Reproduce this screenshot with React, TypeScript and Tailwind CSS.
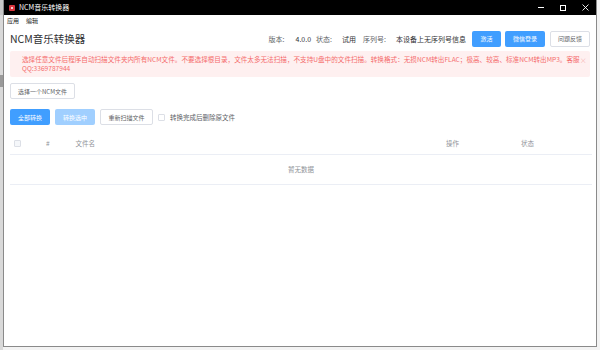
import React from "react";

const F = { fontFamily: '"Noto Sans CJK SC", "Noto Sans", sans-serif' };

export default function App() {
  return (
    <div className="w-[600px] h-[350px] bg-[#f3f3f3] flex overflow-hidden" style={F}>
      <div className="w-[3px] h-full bg-[#d9d9d9] flex flex-col">
        <div className="h-[15px] bg-[#c8c8c8]" />
        <div className="mt-[60px] h-[12px] bg-[#9a9a9a]" />
      </div>
      <div className="w-[594px] h-[347px] flex flex-col bg-white border-l border-r border-b border-[#8a8a8a]">
        {/* title bar */}
        <div className="h-[15px] bg-black flex items-center text-white shrink-0">
          <div className="ml-[5px] w-[6px] h-[6px] rounded-[1px] bg-[#d9363e] flex items-center justify-center">
            <div className="w-[2px] h-[2px] rounded-full bg-white" />
          </div>
          <span className="ml-[4px] text-[7px] leading-none">NCM音乐转换器</span>
          <div className="ml-auto flex items-center h-full text-[8px]">
            <div className="w-[22px] flex justify-center"><div className="w-[6px] h-px bg-white" /></div>
            <div className="w-[22px] flex justify-center"><div className="w-[6px] h-[6px] border border-white" /></div>
            <div className="w-[22px] flex justify-center">
              <svg width="7" height="7" viewBox="0 0 7 7"><path d="M0.5 0.5L6.5 6.5M6.5 0.5L0.5 6.5" stroke="white" strokeWidth="0.9" /></svg>
            </div>
          </div>
        </div>
        {/* menu */}
        <div className="h-[11px] flex items-center gap-[7px] pl-[3px] text-[6px] text-[#222] leading-none shrink-0">
          <span>应用</span>
          <span>编辑</span>
        </div>
        <div className="px-[6px] flex flex-col">
          {/* header */}
          <div className="mt-[5px] h-[16px] flex items-center">
            <div className="text-[10.5px] text-[#303133] leading-none">NCM音乐转换器</div>
            <div className="ml-auto flex items-center text-[7px] leading-none">
              <span className="text-[#606266]">版本:</span>
              <span className="ml-[11px] text-[#303133]">4.0.0</span>
              <span className="ml-[5px] text-[#606266]">状态:</span>
              <span className="ml-[10px] text-[#303133]">试用</span>
              <span className="ml-[7px] text-[#606266]">序列号:</span>
              <span className="ml-[10px] text-[#303133]">本设备上无序列号信息</span>
              <button className="ml-[6px] w-[29px] h-[16px] bg-[#409eff] text-white text-[6px] rounded-[2px] flex items-center justify-center">激活</button>
              <button className="ml-[4px] w-[40px] h-[16px] bg-[#409eff] text-white text-[6px] rounded-[2px] flex items-center justify-center">微信登录</button>
              <button className="ml-[5px] w-[40px] h-[16px] bg-white border border-[#dcdfe6] text-[#606266] text-[6px] rounded-[2px] flex items-center justify-center">问题反馈</button>
            </div>
          </div>
          {/* alert */}
          <div className="mt-[4px] h-[26px] bg-[#fef0f0] rounded-[2px] flex items-start pl-[12px] pr-[8px] pt-[4px] text-[#f56c6c] text-[6.6px] leading-[9px]">
            <div className="flex-1">
              <div className="whitespace-nowrap">选择任意文件后程序自动扫描文件夹内所有NCM文件。不要选择根目录，文件太多无法扫描，不支持U盘中的文件扫描。转换格式：无损NCM转出FLAC；极高、较高、标准NCM转出MP3。客服</div>
              <div>QQ:3369787944</div>
            </div>
            <span className="text-[#f8b4b4] text-[7px] mt-[1px]">×</span>
          </div>
          {/* select */}
          <div className="mt-[6px] flex">
            <button className="w-[65px] h-[16px] border border-[#dcdfe6] rounded-[2px] text-[6px] text-[#606266] bg-white flex items-center justify-center">选择一个NCM文件</button>
          </div>
          {/* actions */}
          <div className="mt-[10px] h-[16px] flex items-center">
            <button className="w-[40px] h-[16px] bg-[#409eff] text-white text-[6px] rounded-[2px] flex items-center justify-center">全部转换</button>
            <button className="ml-[5px] w-[40px] h-[16px] bg-[#a0cfff] text-white text-[6px] rounded-[2px] flex items-center justify-center">转换选中</button>
            <button className="ml-[5px] w-[53px] h-[16px] bg-white border border-[#dcdfe6] text-[#606266] text-[6px] rounded-[2px] flex items-center justify-center">重新扫描文件</button>
            <div className="ml-[5px] w-[7px] h-[7px] border border-[#dcdfe6] rounded-[1px] bg-white" />
            <span className="ml-[5px] text-[6.5px] text-[#606266] leading-none">转换完成后删除原文件</span>
          </div>
          {/* table */}
          <div className="mt-[7px] w-[582px]">
            <div className="h-[23px] flex items-center border-b border-[#ebeef5] text-[6.5px] text-[#909399] leading-none">
              <div className="w-[4px]" />
              <div className="w-[7px] h-[7px] border border-[#dcdfe6] rounded-[1px] bg-[#f5f7fa]" />
              <span className="ml-[25px]">#</span>
              <span className="ml-[26px]">文件名</span>
              <span className="ml-[351px]">操作</span>
              <span className="ml-[62px]">状态</span>
            </div>
            <div className="h-[30px] flex items-center justify-center border-b border-[#ebeef5] text-[6.5px] text-[#909399] leading-none">
              暂无数据
            </div>
          </div>
        </div>
      </div>
      <div className="w-[3px] h-full bg-[#f3f3f3]" />
    </div>
  );
}
